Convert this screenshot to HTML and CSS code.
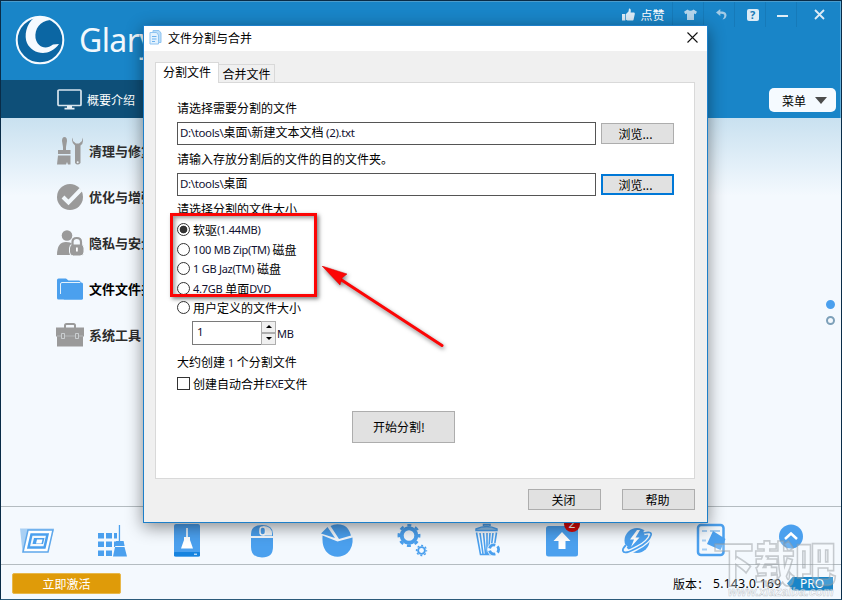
FILE: index.html
```
<!DOCTYPE html>
<html lang="zh-CN">
<head>
    <meta charset="utf-8">
    <title>Glary Utilities</title>
    <link rel="stylesheet" href="styles.css">
</head>

<body>
    <div class="app">
        <header class="app-header">
            <div class="brand">
                <svg width="50" height="50" viewBox="0 0 50 50">
                    <circle cx="25" cy="25" r="23.3" fill="#0b66a3" stroke="#f5faff" stroke-width="2"/>
                    <path d="M19 3C11 9 9 21 12 28C17 39 34 43 44 29L38 29.500C30 36 22 31 20.500 23C19.500 14 25 6 35 5C30 1 23 1 19 3Z" fill="#f5faff"/>
                </svg>
                <span class="brand-name">Glary</span>
            </div>
            <div class="window-tools">
                <span class="tool tool-like">
                    <svg width="13" height="13" viewBox="0 0 13 13" fill="#dcebf6"><path d="M0 6h3.3v6.5H0zM4 6L6.5 3.5L7 0.5Q9.5 0.3 8.6 4.5H12Q13 4.7 12.8 6L11.5 12Q11.2 12.6 10 12.6H5.5L4 11.8z"/></svg>
                    点赞
                </span>
                <span class="tool">
                    <svg width="13" height="11" viewBox="0 0 13 11" fill="#b4d5eb"><path d="M3.5 0.5Q6.5 3 9.5 0.5L13 2.8L11.6 5.3L10 4.5V11H3V4.5L1.4 5.3L0 2.8z"/></svg>
                </span>
                <span class="tool">
                    <svg width="11" height="11" viewBox="0 0 11 11"><path d="M0 3.500L4.300 0V2.500H6.500Q10.500 3 10.500 6.500Q10 10 6.500 10.500Q9 7.500 8 5.500Q7 4.500 4.300 4.700V7z" fill="#a4cbe5"/></svg>
                </span>
                <span class="tool"><b class="help">?</b></span>
                <span class="tool"><i class="minimize"></i></span>
                <span class="tool tool-close">
                    <svg width="11" height="11" viewBox="0 0 11 11" stroke="#dcebf6" stroke-width="1.8"><path d="M1 1L10 10M10 1L1 10"/></svg>
                </span>
            </div>
            <button class="menu-button">菜单 <i class="caret"></i></button>
        </header>

        <nav class="overview">
            <svg width="25" height="21" viewBox="0 0 25 21">
                <rect x="1" y="1" width="23" height="15.5" rx="1" fill="none" stroke="#d7e5ee" stroke-width="1.7"/>
                <path d="M10 17h5v1.8h2.5V20.5h-10V18.8H10z" fill="#e5eef4"/>
            </svg>
            <span>概要介绍</span>
        </nav>

        <main class="app-main">
            <ul class="sidebar">
                <li>
                    <svg width="28" height="30" viewBox="0 0 28 30" fill="#9a9a9a">
                        <path d="M6 5Q6 1 8.5 1Q11 1 11 5L10 11V14H14.500V18H2V14H7V11zM2 19.500H14.500V28.500H12L11 26L10 28.500H1z"/>
                        <path d="M17 1.500V5L20 7.500L23 7.500L26 5V1.500Q28.500 7 24.500 9.500V27Q21.500 30 19 27V9.500Q14.500 6 17 1.500z"/>
                        <circle cx="21.700" cy="26.200" r="1" fill="#edf5fa"/>
                    </svg>
                    <span>清理与修复</span>
                </li>
                <li>
                    <svg width="28" height="28" viewBox="0 0 28 28">
                        <circle cx="14" cy="14" r="13" fill="#9a9a9a"/>
                        <path d="M7 14L12.500 19.500L25 6.500" fill="none" stroke="#f2f8fc" stroke-width="4"/>
                    </svg>
                    <span>优化与增强</span>
                </li>
                <li>
                    <svg width="28" height="26" viewBox="0 0 28 26">
                        <circle cx="11" cy="5.500" r="5.300" fill="#9a9a9a"/>
                        <path d="M1 25Q1 12 10 12Q15 12 16 14V25z" fill="#9a9a9a"/>
                        <rect x="13.500" y="14" width="14.500" height="12" rx="4" fill="#9a9a9a" stroke="#f2f8fc"/>
                        <path d="M16.500 15V12Q16.500 8 20.700 8Q25 8 25 12V15" fill="none" stroke="#9a9a9a" stroke-width="2.200"/>
                        <path d="M20 17.500h1.800v4h-1.800z" fill="#fff"/>
                    </svg>
                    <span>隐私与安全</span>
                </li>
                <li class="selected">
                    <svg width="28" height="22" viewBox="0 0 28 22">
                        <path d="M1 2Q1 0.500 2.500 0.500H10L12.500 2.500H23Q24.500 2.500 24.500 4V8H27V20Q27 21.500 25.500 21.500H2.500Q1 21.500 1 20z" fill="#4ba0ee"/>
                        <path d="M4.500 16V6Q4.500 4.500 6 4.500H25.500Q27 4.500 27 6V20Q27 21.500 25.500 21.500H8" fill="#4ba0ee"/>
                        <path d="M4.500 16V6Q4.500 4.500 6 4.500H24" fill="none" stroke="#e3f1fc"/>
                    </svg>
                    <span>文件文件夹</span>
                </li>
                <li>
                    <svg width="28" height="24" viewBox="0 0 28 24">
                        <path d="M9 5V2.500Q9 1 10.500 1H17.500Q19 1 19 2.500V5" fill="none" stroke="#9a9a9a" stroke-width="2"/>
                        <rect x="0" y="4.500" width="28" height="9" fill="#9a9a9a"/>
                        <rect x="1" y="13" width="26" height="10.500" fill="#9a9a9a"/>
                        <path d="M1 13H5M9 13H19M23 13H27" stroke="#bfc3c5" stroke-width="0.700"/>
                        <path d="M5.500 10.500h3v5h-3zM19.500 10.500h3v5h-3z" fill="#9a9a9a" stroke="#d5dadd" stroke-width="0.800"/>
                    </svg>
                    <span>系统工具</span>
                </li>
            </ul>
            <div class="pager">
                <i class="dot active"></i>
                <i class="dot"></i>
            </div>
        </main>

        <div class="toolbar">
            <svg width="38" height="38" viewBox="0 0 38 38">
                <path d="M2 6.500H36L30 30H4.500z" fill="#a9d0f4"/>
                <path d="M10 8H35L30 30H5z" fill="#fff" stroke="#5fa8eb" stroke-width="1.500"/>
                <path d="M13.500 12.500H29.500L26.500 25.500H10.500z" fill="#f3f9fd" stroke="#4ba0ee" stroke-width="2.500"/>
                <path d="M16 16H26.500L25 22H14.500z" fill="#4ba0ee"/>
                <path d="M19 17.500H24.500L23.500 21.500H18z" fill="#fff"/>
            </svg>
            <svg width="38" height="38" viewBox="0 0 38 38" fill="#4ba0ee">
                <path d="M5 11h6v5.500H5zM13 11h6v5.500h-6zM21 11h3v5.500h-3zM5 19.500h6V25H5zM13 19.500h6V25h-6zM21 19.500h3l-2 5.500h-1zM5 28.500h6V34H5zM13 28.500h6V34h-6z"/>
                <path d="M25.800 3h1.300v16h3.500l1 5H21.500l1.500-5h2.800zM22 25H31.500L34 34.500H20z"/>
            </svg>
            <svg width="38" height="38" viewBox="0 0 38 38">
                <rect x="6" y="2" width="26" height="32.500" rx="2" fill="#4ba0ee"/>
                <rect x="6" y="30" width="26" height="4.500" rx="1" fill="#1683df"/>
                <path d="M18.200 6h1.600v9h2.200v3l3 8.500H13L16 18v-3h2.200z" fill="#fff"/>
                <path d="M26 32.200h3" stroke="#fff"/>
            </svg>
            <svg width="38" height="38" viewBox="0 0 38 38">
                <path d="M8 14V12Q8 3 19 3Q30 3 30 12V14zM8 16H30V25Q30 35.500 19 35.500Q8 35.500 8 25z" fill="#4ba0ee"/>
                <path d="M20 4Q29 4 29 12V13.500H20z" fill="#f4f9fd"/>
                <rect x="17" y="5" width="5.500" height="8" rx="2.700" fill="#4ba0ee" stroke="#fff" stroke-width="1.500"/>
            </svg>
            <svg width="38" height="38" viewBox="0 0 38 38" fill="#4ba0ee">
                <path d="M12.500 4Q18 1 26 3.500Q31 6 33 13.500L21 17zM9.500 5L17 16L3 11.500zM4.500 13.500L19.500 19.500L34.500 15.500Q35.500 25 29.500 31Q22 37 13.500 33.500Q3.500 29 4.500 13.500z"/>
            </svg>
            <svg width="38" height="38" viewBox="0 0 38 38" fill="none" stroke="#4ba0ee">
                <circle cx="16" cy="13.500" r="7.300" stroke-width="4"/>
                <circle cx="16" cy="13.500" r="10.200" stroke-width="2.500" stroke-dasharray="4 4.010" stroke-dashoffset="2"/>
                <circle cx="28.500" cy="28.500" r="3.400" stroke-width="1.900"/>
                <circle cx="28.500" cy="28.500" r="5" stroke-width="1.400" stroke-dasharray="2 1.930" stroke-dashoffset="1"/>
            </svg>
            <svg width="38" height="38" viewBox="0 0 38 38" fill="none" stroke="#4ba0ee">
                <path d="M15.500 4V2.500H22V4M8 7Q18.500 2 29 7V8.500H8z" stroke-width="1.500" fill="#92c2e9"/>
                <path d="M8.500 10.500L12.500 32.500H25L28.500 10.500M12 11L15 32M15.500 11L17.500 32M19 11V32M22 11L20.500 32M25 11L22.500 32" stroke-width="1.600"/>
                <circle cx="26" cy="27.500" r="6.800" fill="#f5faff" stroke="none"/>
                <circle cx="26" cy="27.500" r="4.600" stroke-width="2.800" stroke-dasharray="7.200 2.430" stroke-dashoffset="4"/>
            </svg>
            <div class="update">
                <svg width="38" height="38" viewBox="0 0 38 38">
                    <rect x="3" y="4" width="32" height="30.500" rx="2.500" fill="#4ba0ee"/>
                    <path d="M19 10L27.500 19H22.500V27H15.500V19H10.500z" fill="#fff"/>
                </svg>
                <span class="badge">2</span>
            </div>
            <svg width="38" height="38" viewBox="0 0 38 38">
                <circle cx="19" cy="18.500" r="12.500" fill="#4ba0ee"/>
                <path d="M26 11Q34 9 33 13Q31 20 19 26Q6 33 5 29Q4 27 8 23" fill="none" stroke="#f4f9fd" stroke-width="4.500"/>
                <path d="M26 11Q34 9 33 13Q31 20 19 26Q6 33 5 29Q4 27 8 23" fill="none" stroke="#4ba0ee" stroke-width="1.800"/>
                <path d="M19 8L12 17.500H16L13 25L21.500 15.500H17.500L22 8z" fill="#fff"/>
            </svg>
            <svg width="38" height="38" viewBox="0 0 38 38">
                <rect x="5" y="3" width="25.500" height="30" rx="3" fill="#f4f9fd" stroke="#4ba0ee" stroke-width="2.500"/>
                <path d="M9 9H14M17 9H27M9 18.500H13M9 27.500H14" stroke="#a7cff3" stroke-width="2"/>
                <path d="M20 9L32.500 17L27.500 28L14 22z" fill="#4ba0ee"/>
            </svg>
            <svg class="expand" width="38" height="38" viewBox="0 0 38 38">
                <circle cx="19" cy="14.500" r="12" fill="#4ba0ee"/>
                <path d="M13 17L19 11.500L25 17" fill="none" stroke="#fff" stroke-width="2.500"/>
            </svg>
        </div>

        <footer class="app-footer">
            <button class="activate">立即激活</button>
            <div class="version">
                <span>版本：</span>
                <span class="version-number">5.143.0.169</span>
                <span class="pro">PRO</span>
            </div>
        </footer>

        <!-- Site watermark -->
        <div class="watermark">
            <span class="watermark-name">下载吧</span>
            <span class="watermark-url">www.xiazaiba.com</span>
        </div>

        <!-- Split / join dialog -->
        <section class="dialog">
            <div class="dialog-title">
                <svg width="14" height="17" viewBox="0 0 14 17">
                    <path d="M4 1.500H10L12 4V13.500H4z" fill="#b9dcf8" stroke="#8fc4f1"/>
                    <path d="M1 3.500H7.500L9.500 6V15H1z" fill="#e3f2fe" stroke="#8fc4f1"/>
                    <path d="M3 7.500H7.500M3 10H7.500M3 12.500H6" stroke="#6db2ef"/>
                </svg>
                <span>文件分割与合并</span>
                <svg class="dialog-close" width="11" height="11" viewBox="0 0 11 11" stroke="#111" stroke-width="1.100"><path d="M0.500 0.500L10.500 10.500M10.500 0.500L0.500 10.500"/></svg>
            </div>

            <div class="dialog-body">
                <div class="tabs">
                    <span class="tab active">分割文件</span>
                    <span class="tab">合并文件</span>
                </div>

                <div class="pane">
                    <p>请选择需要分割的文件</p>
                    <div class="field">
                        <div class="input"><span class="en">D:\tools\</span>桌面<span class="en">\</span>新建文本文档 <span class="en">(2).txt</span></div>
                        <button class="btn browse">浏览...</button>
                    </div>
                    <p>请输入存放分割后的文件的目的文件夹。</p>
                    <div class="field">
                        <div class="input"><span class="en">D:\tools\</span>桌面</div>
                        <button class="btn browse focus">浏览...</button>
                    </div>
                    <p class="size-label">请选择分割的文件大小</p>
                    <ul class="sizes">
                        <li><i class="radio checked"></i>软驱<span class="en">(1.44MB)</span></li>
                        <li><i class="radio"></i><span class="en">100 MB Zip(TM)</span> 磁盘</li>
                        <li><i class="radio"></i><span class="en">1 GB Jaz(TM)</span> 磁盘</li>
                        <li><i class="radio"></i><span class="en">4.7GB</span> 单面<span class="en">DVD</span></li>
                        <li><i class="radio"></i>用户定义的文件大小</li>
                    </ul>
                    <div class="custom-size">
                        <div class="number en">1</div>
                        <div class="spinner">
                            <span><i class="up"></i></span>
                            <span><i class="down"></i></span>
                        </div>
                        <span class="en unit">MB</span>
                    </div>
                    <p class="estimate">大约创建 <span class="en">1</span> 个分割文件</p>
                    <div class="check"><i class="checkbox"></i>创建自动合并<span class="en">EXE</span>文件</div>
                    <button class="btn start">开始分割!</button>
                </div>

                <div class="dialog-actions">
                    <button class="btn">关闭</button>
                    <button class="btn">帮助</button>
                </div>
            </div>
        </section>

        <!-- Highlight and arrow over the size options -->
        <div class="highlight"></div>
        <svg class="arrow" width="130" height="92" viewBox="0 0 130 92">
            <path d="M19 13L121 79.500" stroke="#fc0505" stroke-width="3" stroke-linecap="round"/>
            <path d="M1 0L26 8L21 12L19 19Z" fill="#fc0505" stroke="#d60000" stroke-width="0.500"/>
        </svg>
    </div>
</body>
</html>
```
FILE: styles.css
```
* {
    box-sizing: border-box;
    margin: 0;
    padding: 0;
}

body {
    width: 842px;
    height: 600px;
    overflow: hidden;
    font: 12px "Noto Sans CJK SC", sans-serif;
    color: #000;
}

ul {
    list-style: none;
}

button {
    font: inherit;
}

svg {
    display: block;
    flex: none;
}

.app {
    position: relative;
    display: flex;
    flex-direction: column;
    width: 842px;
    height: 600px;
    overflow: hidden;
    background-color: #f4f9fe;
    border: 1px solid #092c48;
    border-bottom-color: #2b5a7a;
}

/* Header */
.app-header {
    display: grid;
    grid-template-columns: 1fr auto;
    grid-template-rows: 29px 1fr;
    height: 117px;
    margin-bottom: -38px;
    background-color: #1985c8;
    border-top: 1px solid #4b9ccd;
    border-right: 1px solid #62afdb;
    flex: none;
}

.brand {
    display: flex;
    align-items: center;
    grid-row: 1 / 3;
    height: 76px;
    padding-left: 14px;
}

.brand-name {
    margin-left: 14px;
    color: #f2f8fc;
    font: 32px/40px "Noto Sans", sans-serif;
    letter-spacing: -0.6px;
}

.window-tools {
    display: flex;
    height: 25px;
}

.tool {
    display: flex;
    align-items: center;
    justify-content: center;
    width: 31px;
    padding-left: 5px;
    border-left: 1px solid #167ab9;
}

.tool-like {
    width: 50px;
    gap: 5px;
    margin-right: 4px;
    padding-left: 1px;
    border: none;
    color: #fff;
    white-space: nowrap;
}

.tool-close {
    width: 44px;
    padding-left: 1px;
}

.help {
    width: 12px;
    height: 12px;
    border-radius: 2px;
    background-color: #dcebf6;
    color: #1979b5;
    font: bold 11px/12px "Noto Sans", sans-serif;
    text-align: center;
}

.minimize {
    width: 11px;
    height: 2px;
    margin: 3px 3px 0 0;
    background-color: #e0eef7;
}

.menu-button {
    display: flex;
    align-items: center;
    justify-content: space-between;
    justify-self: end;
    width: 67px;
    height: 24px;
    margin: 57px 4px 0 0;
    padding: 0 9px 0 13px;
    border: none;
    border-radius: 5px;
    background-color: #f5faff;
}

.caret {
    border: 6px solid transparent;
    border-top: 7px solid #4c4c4c;
    border-bottom: none;
}

.overview {
    display: flex;
    align-items: center;
    width: 143px;
    height: 38px;
    padding-left: 56px;
    gap: 5px;
    background-color: #0e4f78;
    color: #fff;
    flex: none;
}

/* Main area */
.app-main {
    display: flex;
    justify-content: space-between;
    flex: 1;
    padding-top: 10px;
    background: linear-gradient(#c9e1f0, #f4f9fe 78px);
}

.sidebar li {
    display: flex;
    align-items: center;
    height: 46px;
    padding-left: 55px;
    gap: 5px;
    color: #2c2c2c;
    font-size: 13px;
    font-weight: bold;
    line-height: 18px;
    white-space: nowrap;
}

.sidebar .selected {
    color: #000;
}

.pager {
    padding: 172px 6px 0 0;
}

.dot {
    display: block;
    width: 9px;
    height: 9px;
    margin-bottom: 7px;
    border: 2px solid #7da0b9;
    border-radius: 50%;
}

.dot.active {
    border-color: #4ba0ee;
    background-color: #4ba0ee;
}

/* Bottom toolbar */
.toolbar {
    display: flex;
    height: 58px;
    padding: 15px 0 0 17px;
    gap: 37px;
    border-top: 1px solid #b4bcc1;
    flex: none;
}

.toolbar .expand {
    margin-left: 4px;
}

.update {
    position: relative;
}

.badge {
    position: absolute;
    left: 21px;
    top: -6px;
    width: 16px;
    height: 16px;
    border-radius: 50%;
    background-color: #d50909;
    color: #fff;
    font: 12px/16px "Noto Sans", sans-serif;
    text-align: center;
}

.app-footer {
    display: flex;
    align-items: center;
    justify-content: space-between;
    height: 35px;
    padding: 3px 8px 0 11px;
    border-top: 1px solid #b4bcc1;
    flex: none;
}

.activate {
    width: 109px;
    height: 21px;
    border: 1px solid #e8b84b;
    border-radius: 2px;
    background-color: #df9b09;
    color: #fff;
    line-height: 19px;
}

.version {
    display: flex;
    align-items: center;
}

.version-number {
    width: 74px;
    margin-left: 4px;
    font: 12px "Noto Sans", sans-serif;
    letter-spacing: 0.35px;
}

.pro {
    width: 46px;
    height: 14px;
    padding-left: 13px;
    background-color: #1985c8;
    clip-path: polygon(0 50%, 6px 0, 100% 0, 100% 100%, 6px 100%);
    color: #fff;
    font: 12px/14px "Noto Sans", sans-serif;
}

.watermark {
    position: absolute;
    left: 712px;
    top: 533px;
    width: 125px;
    white-space: nowrap;
}

.watermark-name {
    display: block;
    color: rgba(255, 255, 255, 0.2);
    font-size: 41px;
    font-weight: 900;
    line-height: 52px;
    transform: scaleY(1.15);
    -webkit-text-stroke: 1.5px rgba(150, 155, 160, 0.5);
}

.watermark-url {
    display: block;
    margin: 0 0 0 15px;
    color: rgba(255, 255, 255, 0.5);
    font: italic bold 12px/12px "Liberation Sans", sans-serif;
    -webkit-text-stroke: 0.5px rgba(140, 145, 150, 0.5);
}

/* Dialog */
.dialog {
    position: absolute;
    left: 142px;
    top: 24px;
    width: 565px;
    height: 498px;
    border: 1px solid #1d7fc9;
    background-color: #f0f0f0;
    box-shadow: 0 4px 16px rgba(0, 0, 0, 0.45);
}

.dialog-title {
    display: flex;
    align-items: center;
    height: 25px;
    padding: 0 9px 2px 5px;
    gap: 5px;
    background-color: #fff;
}

.dialog-close {
    margin-left: auto;
}

.dialog-body {
    padding: 11px 12px 0 11px;
}

.tabs {
    display: flex;
    align-items: flex-end;
    height: 20px;
}

.tab {
    width: 56px;
    height: 18px;
    border: 1px solid #d9d9d9;
    border-left: none;
    border-bottom: none;
    line-height: 18px;
    text-align: center;
}

.tab.active {
    z-index: 1;
    width: 64px;
    height: 21px;
    margin-bottom: -1px;
    border-left: 1px solid #d9d9d9;
    background-color: #fff;
}

.pane {
    height: 397px;
    padding: 15px 20px 0 21px;
    border: 1px solid #d9d9d9;
    background-color: #fff;
}

.pane p {
    height: 20px;
    margin: 4px 0;
    line-height: 20px;
}

.pane p:first-child {
    margin-top: 0;
}

.en {
    font-family: "Noto Sans", sans-serif;
    font-size: 11.5px;
    letter-spacing: -0.35px;
    color: #101030;
}

.field {
    display: flex;
    align-items: center;
    gap: 5px;
    height: 23px;
}

.input {
    width: 419px;
    height: 23px;
    padding-left: 2px;
    border: 1px solid #555;
    line-height: 18px;
}

.btn {
    width: 73px;
    height: 21px;
    padding-right: 2px;
    border: 1px solid #adadad;
    background-color: #e1e1e1;
    line-height: 17px;
}

.btn.browse {
    padding-right: 4px;
}

.btn.focus {
    border: 2px solid #0078d7;
}

.pane .size-label {
    margin: 3px 0 1px;
}

.sizes li {
    display: flex;
    align-items: center;
    height: 19.5px;
    white-space: pre;
}

.sizes .en {
    font-size: 11px;
    letter-spacing: -0.25px;
}

.radio {
    width: 13px;
    height: 13px;
    margin-right: 3px;
    border: 1px solid #333;
    border-radius: 50%;
}

.radio.checked {
    background: radial-gradient(#333 3.5px, #fff 4.2px);
}

.custom-size {
    display: flex;
    height: 24px;
    margin: 3px 0 7px 15px;
}

.number {
    width: 69px;
    padding-left: 4px;
    border: 1px solid #7a7a7a;
    border-right: none;
    line-height: 19px;
}

.spinner {
    width: 15px;
}

.spinner span {
    display: flex;
    align-items: center;
    justify-content: center;
    height: 12px;
    border: 1px solid #adadad;
    background-color: #f0f0f0;
}

.up,
.down {
    border: 3px solid transparent;
}

.up {
    border-top: none;
    border-bottom-color: #000;
}

.down {
    border-bottom: none;
    border-top-color: #000;
}

.unit {
    margin-left: 1px;
    font-size: 11px;
    line-height: 26px;
}

.pane .estimate {
    margin-bottom: 2px;
}

.check {
    display: flex;
    align-items: center;
    height: 20px;
}

.checkbox {
    width: 13px;
    height: 13px;
    margin-right: 3px;
    border: 1px solid #333;
}

.start {
    display: block;
    width: 103px;
    height: 32px;
    margin: 17px 0 0 175px;
    padding-right: 9px;
}

.dialog-actions {
    display: flex;
    justify-content: flex-end;
    gap: 21px;
    padding-top: 10px;
}

/* Annotations */
.highlight {
    position: absolute;
    left: 169px;
    top: 212px;
    width: 147px;
    height: 84px;
    border: 3px solid #fc0505;
    box-shadow: 2px 2px 4px rgba(0, 0, 0, 0.5), inset 2px 2px 4px rgba(0, 0, 0, 0.4);
}

.arrow {
    position: absolute;
    left: 320px;
    top: 265px;
    filter: drop-shadow(1px 2px 2px rgba(0, 0, 0, 0.5));
}
```
